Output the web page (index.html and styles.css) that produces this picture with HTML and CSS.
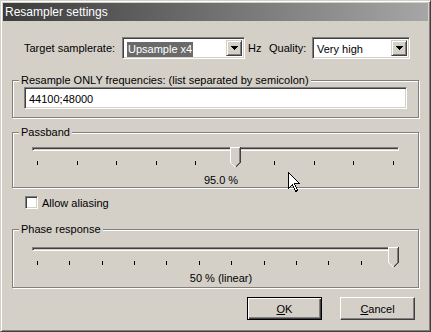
FILE: index.html
```html
<!DOCTYPE html>
<html lang="en">
<head>
    <meta charset="UTF-8">
    <title>Resampler settings</title>
    <link rel="stylesheet" href="styles.css">
</head>
<body>
    <div class="window">
        <div class="titlebar">Resampler settings</div>
        <div class="client">
            <div class="rate-row">
                <span class="lbl-target">Target samplerate:</span>
                <div class="combo combo-rate">
                    <span class="combo-value"><span class="selected">Upsample x4</span></span>
                    <span class="drop-btn"><svg width="7" height="4" shape-rendering="crispEdges"><path d="M0 0h7v1H0zM1 1h5v1H1zM2 2h3v1H2zM3 3h1v1H3z" fill="#000"/></svg></span>
                </div>
                <span class="lbl-hz">Hz</span>
                <span class="lbl-quality">Quality:</span>
                <div class="combo combo-quality">
                    <span class="combo-value">Very high</span>
                    <span class="drop-btn"><svg width="7" height="4" shape-rendering="crispEdges"><path d="M0 0h7v1H0zM1 1h5v1H1zM2 2h3v1H2zM3 3h1v1H3z" fill="#000"/></svg></span>
                </div>
            </div>

            <div class="group group-freq">
                <span class="group-caption">Resample ONLY frequencies: (list separated by semicolon)</span>
                <div class="textbox">44100;48000</div>
            </div>

            <div class="group group-passband">
                <span class="group-caption">Passband</span>
                <div class="slider">
                    <div class="track"></div>
                    <div class="thumb" style="--pos: 0.5556"><svg width="11" height="21" shape-rendering="crispEdges"><path d="M0 0h10v15l-5 5l-5-5z" fill="#d4d0c8"/><path d="M0.5 15.5V0.5H10M0.5 15.5L5 20" stroke="#fff" fill="none"/><path d="M9.5 1V15.5L5.5 19.5" stroke="#808080" fill="none"/><path d="M10.5 0V15.5L5.5 20.5" stroke="#404040" fill="none"/></svg></div>
                    <div class="ticks"><i></i><i></i><i></i><i></i><i></i><i></i><i></i><i></i><i></i><i></i></div>
                </div>
                <div class="slider-value">95.0 %</div>
            </div>

            <label class="check-row"><span class="checkbox"></span>Allow aliasing</label>

            <div class="group group-phase">
                <span class="group-caption">Phase response</span>
                <div class="slider">
                    <div class="track"></div>
                    <div class="thumb" style="--pos: 1"><svg width="11" height="21" shape-rendering="crispEdges"><path d="M0 0h10v15l-5 5l-5-5z" fill="#d4d0c8"/><path d="M0.5 15.5V0.5H10M0.5 15.5L5 20" stroke="#fff" fill="none"/><path d="M9.5 1V15.5L5.5 19.5" stroke="#808080" fill="none"/><path d="M10.5 0V15.5L5.5 20.5" stroke="#404040" fill="none"/></svg></div>
                    <div class="ticks"><i></i><i></i><i></i><i></i><i></i><i></i><i></i><i></i><i></i><i></i><i></i><i></i></div>
                </div>
                <div class="slider-value">50 % (linear)</div>
            </div>

            <div class="button-row">
                <button class="btn btn-default"><u>O</u>K</button>
                <button class="btn"><u>C</u>ancel</button>
            </div>
        </div>

        <!-- mouse pointer left over the dialog -->
        <svg class="cursor" width="12" height="20" shape-rendering="crispEdges"><path d="M0.5 0.5V16.5L4.5 12.5L7.5 19.5L9.5 18.5L6.5 11.5H11.5Z" fill="#fff" stroke="#000"/></svg>
    </div>
</body>
</html>
```

FILE: styles.css
```css
:root {
    --face: #d4d0c8;
    --shadow: #808080;
    --dark: #404040;
    --light: #fff;
}

body {
    margin: 0;
    font-family: "Liberation Sans", Arial, sans-serif;
    font-size: 11px;
    color: #000;
    background: var(--face);
}

.window {
    position: relative;
    width: 431px;
    height: 332px;
    box-sizing: border-box;
    padding: 2px;
    background: var(--face);
    border: 1px solid;
    border-color: var(--face) var(--dark) var(--dark) var(--face);
    box-shadow: inset 1px 1px 0 var(--light), inset -1px -1px 0 var(--shadow);
}

.titlebar {
    height: 18px;
    line-height: 18px;
    padding-left: 2px;
    margin-bottom: 1px;
    font-size: 12px;
    color: #fff;
    background: linear-gradient(to right, #3c3c3c, #a6a6a6);
}

.client {
    padding-top: 15px;
}

/* top row */
.rate-row {
    display: flex;
    align-items: center;
    height: 22px;
    padding-left: 21px;
}

.lbl-target {
    width: 98px;
}

.lbl-hz {
    margin-left: 3px;
    width: 21px;
}

.lbl-quality {
    width: 43px;
}

.combo {
    display: flex;
    box-sizing: border-box;
    height: 22px;
    padding: 2px;
    background: #fff;
    border: 1px solid;
    border-color: var(--shadow) var(--light) var(--light) var(--shadow);
    box-shadow: inset 1px 1px 0 var(--dark), inset -1px -1px 0 var(--face);
}

.combo-rate {
    width: 123px;
}

.combo-quality {
    width: 98px;
}

.combo-value {
    flex: 1;
    line-height: 18px;
    padding-left: 2px;
}

.selected {
    background: #6a6a6a;
    color: #fff;
    padding: 1px 1px 2px;
}

.drop-btn {
    display: flex;
    align-items: center;
    justify-content: center;
    width: 16px;
    box-sizing: border-box;
    background: var(--face);
    border: 1px solid;
    border-color: var(--face) var(--dark) var(--dark) var(--face);
    box-shadow: inset 1px 1px 0 var(--light), inset -1px -1px 0 var(--shadow);
}

/* group boxes */
.group {
    position: relative;
    margin: 0 9px;
    border: 1px solid var(--shadow);
    box-shadow: inset 1px 1px 0 var(--light), 1px 1px 0 var(--light);
}

.group-caption {
    position: absolute;
    top: -7px;
    left: 6px;
    padding: 0 2px;
    line-height: 13px;
    background: var(--face);
}

.group-freq {
    margin-top: 21px;
    padding: 6px 11px 8px;
}

.textbox {
    box-sizing: border-box;
    height: 22px;
    line-height: 18px;
    padding: 2px 4px;
    background: #fff;
    border: 1px solid;
    border-color: var(--shadow) var(--light) var(--light) var(--shadow);
    box-shadow: inset 1px 1px 0 var(--dark), inset -1px -1px 0 var(--face);
}

.group-passband {
    margin-top: 14px;
    padding-top: 5px;
}

.group-phase {
    margin-top: 20px;
    padding-top: 8px;
    padding-bottom: 2px;
}

/* trackbar */
.slider {
    position: relative;
    margin: 0 19px;
}

.track {
    height: 4px;
    margin-top: 9px;
    box-sizing: border-box;
    border: 1px solid;
    border-color: var(--shadow) var(--light) var(--light) var(--shadow);
    box-shadow: inset 1px 1px 0 var(--dark);
}

.thumb {
    position: absolute;
    top: 0;
    left: calc(var(--pos) * (100% - 11px));
    width: 11px;
    height: 21px;
}

.thumb svg {
    display: block;
}

.ticks {
    display: flex;
    justify-content: space-between;
    padding: 0 5px;
    margin-top: 10px;
}

.ticks i {
    width: 1px;
    height: 4px;
    background: #000;
}

.slider-value {
    margin-top: 9px;
    padding-left: 11px;
    line-height: 13px;
    text-align: center;
}

.group-phase .slider-value {
    margin-top: 7px;
}

/* checkbox */
.check-row {
    display: flex;
    align-items: center;
    margin-top: 8px;
    padding-left: 22px;
    height: 13px;
}

.checkbox {
    width: 13px;
    height: 13px;
    box-sizing: border-box;
    margin-right: 4px;
    background: #fff;
    border: 1px solid;
    border-color: var(--shadow) var(--light) var(--light) var(--shadow);
    box-shadow: inset 1px 1px 0 var(--dark), inset -1px -1px 0 var(--face);
}

/* buttons */
.button-row {
    display: flex;
    justify-content: flex-end;
    gap: 18px;
    margin-top: 9px;
    padding-right: 13px;
}

.btn {
    width: 75px;
    height: 23px;
    padding: 0;
    font: inherit;
    color: #000;
    background: var(--face);
    border: 1px solid;
    border-color: var(--light) var(--dark) var(--dark) var(--light);
    box-shadow: inset -1px -1px 0 var(--shadow);
}

.btn-default {
    border: 1px solid #000;
    box-shadow: inset 1px 1px 0 var(--light), inset -1px -1px 0 var(--dark), inset -2px -2px 0 var(--shadow);
}

.cursor {
    position: absolute;
    left: 287px;
    top: 171px;
}
```
